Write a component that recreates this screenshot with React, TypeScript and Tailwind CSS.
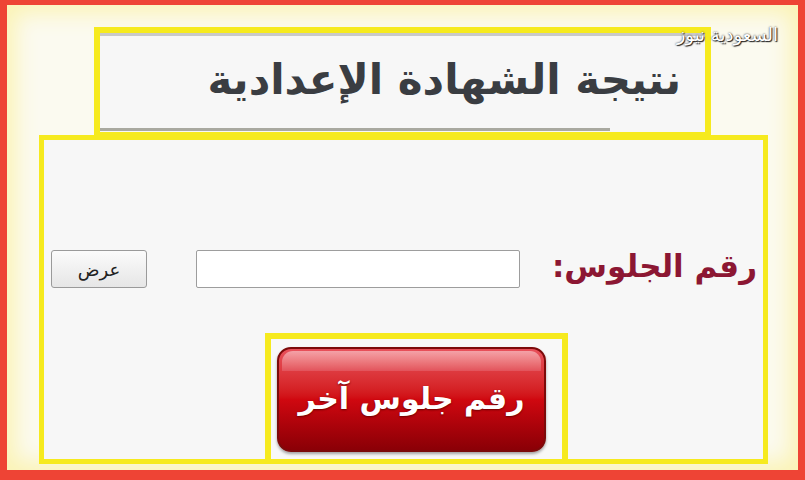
import React from "react";

const App = () => {
  return (
    <div className="relative w-[805px] h-[480px] overflow-hidden border-l-[7px] border-r-[7px] border-t-[5px] border-b-[10px] border-[#ee4435] bg-[#fbfaf0] shadow-[inset_0_0_22px_8px_#fbf3b4] font-['DejaVu_Sans',sans-serif]">
      <div className="absolute z-10 right-[20px] top-[19px] whitespace-nowrap text-[18px] leading-[22px] text-white [text-shadow:0_0_2px_#222,1px_1px_1px_#222]" dir="rtl">
        السعودية نيوز
      </div>

      <div className="flex flex-col">
        {/* header box */}
        <div className="relative ml-[87px] mt-[22px] w-[617px] h-[111px] border-[6px] border-[#f6ea1e] bg-[#f7f7f7]">
          <div className="h-[3px] bg-[#c9c9c9]" />
          <div className="flex justify-end pr-[24px] pt-[23px]">
            <h1 className="text-[42px] font-bold leading-none text-[#3a3d42]" dir="rtl">
              نتيجة الشهادة الإعدادية
            </h1>
          </div>
          <div className="absolute left-0 bottom-[1px] w-[510px] h-[3px] bg-[#a9a9a0]" />
        </div>

        {/* form box */}
        <div className="ml-[32px] -mt-[3px] w-[729px] h-[329px] border-[5px] border-[#f6ea1e] bg-[#f7f7f7] flex flex-col">
          <div className="mt-[110px] flex items-center">
            <button className="ml-[7px] w-[96px] h-[38px] rounded-[3px] border border-[#9a9a9a] bg-gradient-to-b from-[#fbfbfb] to-[#e6e6e6] text-[18px] text-[#222]">
              عرض
            </button>
            <input
              type="text"
              className="ml-[49px] w-[324px] h-[38px] rounded-[2px] border border-[#9d9d9d] bg-white"
            />
            <div className="flex-1 pr-[6px] text-right text-[31px] font-semibold leading-none text-[#8c1733] pb-[6px]" dir="ltr">
              <span dir="rtl">رقم الجلوس:</span>
            </div>
          </div>

          <div className="mt-[45px] ml-[221px] w-[303px] flex-1 border-[6px] border-b-0 border-[#f6ea1e] bg-[#f8f8f8]">
            <div className="ml-[6px] mt-[8px] w-[269px] h-[105px] rounded-[14px] border-2 border-[#7d0a0a] bg-gradient-to-b from-[#e8505a] via-[#d00810] to-[#8a0006] shadow-[0_2px_3px_rgba(0,0,0,0.35)] flex items-center justify-center overflow-hidden relative">
              <div className="absolute left-[3px] right-[3px] top-[2px] h-[20px] rounded-t-[11px] bg-gradient-to-b from-[#f6b0b5] to-[#e35760] opacity-85" />
              <span className="relative text-[30px] font-bold text-white leading-none pb-[2px] [text-shadow:0_1px_2px_#6a0000]" dir="rtl">
                رقم جلوس آخر
              </span>
            </div>
          </div>
        </div>
      </div>
    </div>
  );
};

export default App;
